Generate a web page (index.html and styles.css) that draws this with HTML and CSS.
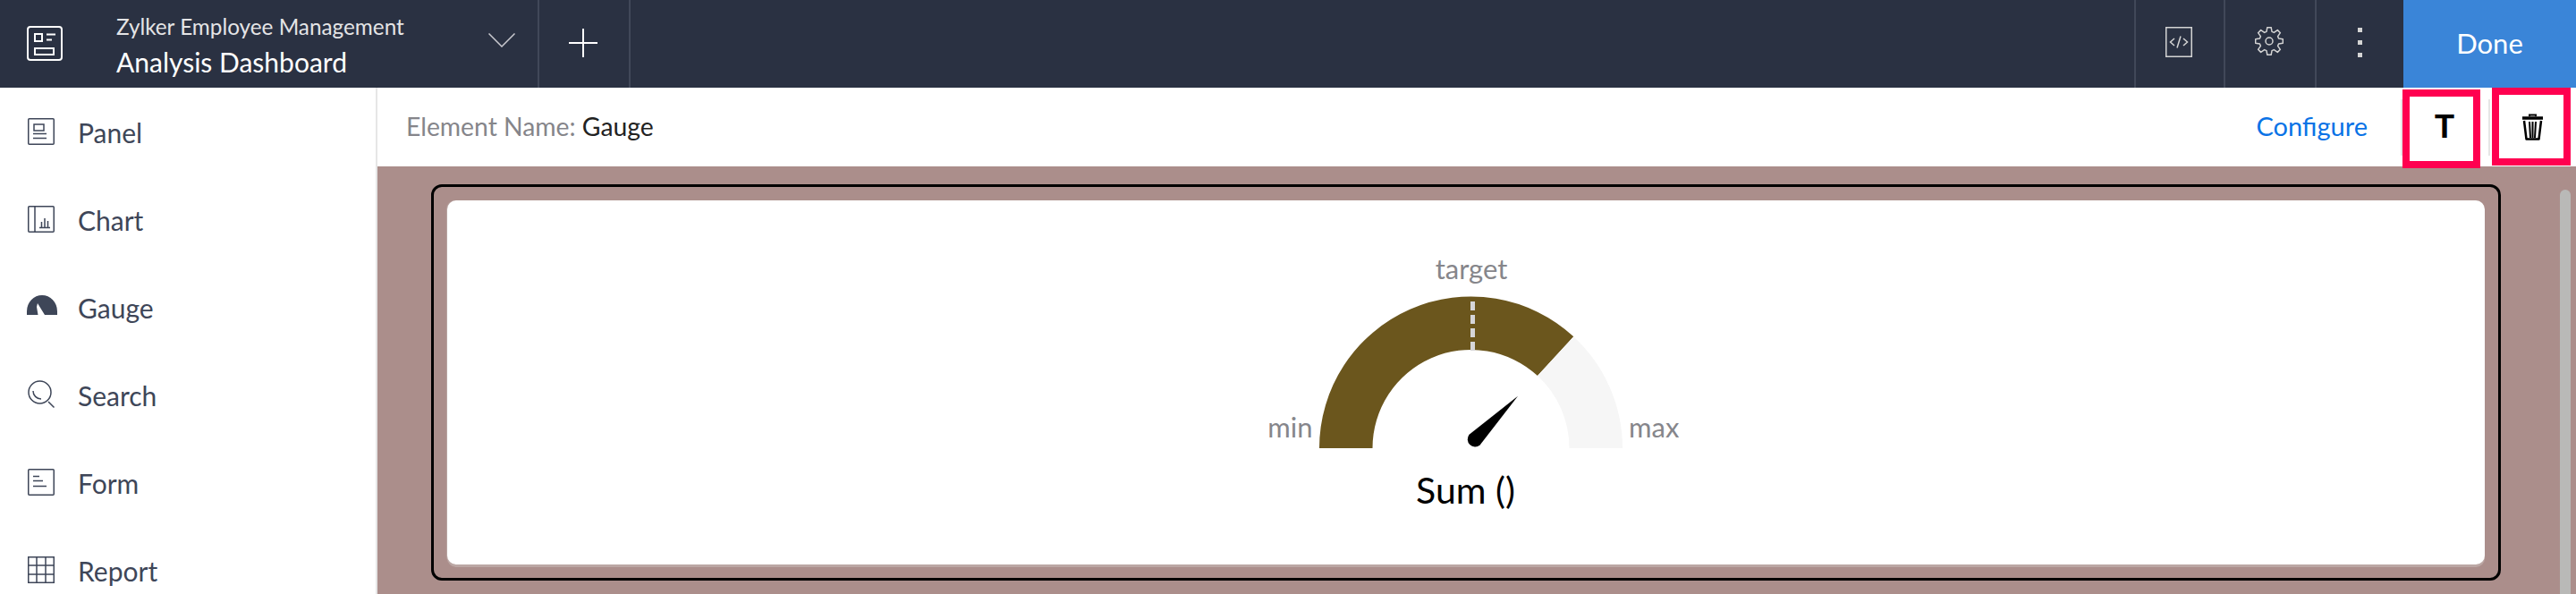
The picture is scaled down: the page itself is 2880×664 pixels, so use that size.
FILE: index.html
```html
<!DOCTYPE html>
<html lang="en">
<head>
    <meta charset="UTF-8">
    <title>Analysis Dashboard</title>
    <link rel="stylesheet" href="styles.css">
</head>
<body>
    <div class="app">
        <header class="topbar">
            <div class="brand">
                <svg class="brand-icon" viewBox="0 0 40 40" fill="none" stroke="#fff" stroke-width="2">
                    <rect x="1" y="1" width="38" height="37" rx="3"/>
                    <rect x="9" y="9" width="8" height="8"/>
                    <path d="M22 9.500h10M22 15.500h6"/>
                    <rect x="9" y="25" width="21" height="7"/>
                </svg>
                <div class="brand-text">
                    <div class="app-name">Zylker Employee Management</div>
                    <div class="page-name">Analysis Dashboard</div>
                </div>
                <svg class="chevron" viewBox="0 0 30 16" fill="none" stroke="#c9c9cf" stroke-width="1.500">
                    <path d="M0.500 0.500L15 15L29.500 0.500"/>
                </svg>
            </div>
            <div class="top-cell add-cell">
                <svg class="plus" viewBox="0 0 32 32" fill="none" stroke="#fff" stroke-width="2">
                    <path d="M16 0V32M0 16H32"/>
                </svg>
            </div>
            <div class="top-spacer"></div>
            <div class="top-cell code-cell">
                <svg class="code-icon" viewBox="0 0 30 34" fill="none" stroke="#d4d4d4" stroke-width="1.500">
                    <rect x="0.750" y="0.750" width="28.500" height="32.500"/>
                    <path d="M10 13L5.500 17L10 21M20 13L24.500 17L20 21M17 10.500L13 23.500"/>
                </svg>
            </div>
            <div class="top-cell gear-cell">
                <svg class="gear-icon" viewBox="0 0 32 32" fill="none" stroke="#d4d4d4" stroke-width="1.500" stroke-linejoin="round">
                    <polygon points="12.970,5.430 13.840,0.650 18.160,0.650 19.030,5.430 21.330,6.380 25.330,3.620 28.380,6.670 25.620,10.670 26.570,12.970 31.350,13.840 31.350,18.160 26.570,19.030 25.620,21.330 28.380,25.330 25.330,28.380 21.330,25.620 19.030,26.570 18.160,31.350 13.840,31.350 12.970,26.570 10.670,25.620 6.670,28.380 3.620,25.330 6.380,21.330 5.430,19.030 0.650,18.160 0.650,13.840 5.430,12.970 6.380,10.670 3.620,6.670 6.670,3.620 10.670,6.380"/>
                    <circle cx="16" cy="16" r="4"/>
                </svg>
            </div>
            <div class="top-cell more-cell">
                <span class="dot"></span>
                <span class="dot"></span>
                <span class="dot"></span>
            </div>
            <button class="done-btn">Done</button>
        </header>

        <div class="main">
            <nav class="sidebar">
                <div class="nav-item">
                    <svg class="nav-icon" viewBox="0 0 30 30" fill="none" stroke="#3e4658" stroke-width="1.500">
                        <rect x="0.750" y="0.750" width="28.500" height="28.500" rx="1"/>
                        <rect x="7" y="7" width="11" height="7"/>
                        <path d="M6 17.500H21M6 22.500H21"/>
                    </svg>
                    <span>Panel</span>
                </div>
                <div class="nav-item">
                    <svg class="nav-icon" viewBox="0 0 30 30" fill="none" stroke="#3e4658" stroke-width="1.500">
                        <rect x="0.750" y="0.750" width="28.500" height="28.500" rx="1"/>
                        <path d="M8 1V29M13 24.500H25M15.500 24V18M19 24V14M22.500 24V17"/>
                    </svg>
                    <span>Chart</span>
                </div>
                <div class="nav-item">
                    <svg class="nav-icon" viewBox="0 0 30 30" fill="#3e4658">
                        <path d="M-1 24V20A17 18 0 0 1 33 20V24H19L11 11L10 15L11.500 24Z"/>
                    </svg>
                    <span>Gauge</span>
                </div>
                <div class="nav-item">
                    <svg class="nav-icon" viewBox="0 0 30 30" fill="none" stroke="#3e4658" stroke-width="1.500">
                        <circle cx="13.500" cy="12.500" r="12.500"/>
                        <path d="M6 11C6 16 10 20 15 20M23 23L29.500 29.500"/>
                    </svg>
                    <span>Search</span>
                </div>
                <div class="nav-item">
                    <svg class="nav-icon" viewBox="0 0 30 30" fill="none" stroke="#3e4658" stroke-width="1.500">
                        <rect x="0.750" y="0.750" width="28.500" height="28.500" rx="1"/>
                        <path d="M6 8.500H13M6 13.500H17M6 19.500H21"/>
                    </svg>
                    <span>Form</span>
                </div>
                <div class="nav-item">
                    <svg class="nav-icon" viewBox="0 0 30 30" fill="none" stroke="#3e4658" stroke-width="1.500">
                        <rect x="0.750" y="0.750" width="28.500" height="28.500"/>
                        <path d="M10 1V29M20 1V29M1 10H29M1 20H29"/>
                    </svg>
                    <span>Report</span>
                </div>
            </nav>

            <section class="content">
                <div class="toolbar">
                    <div class="element-name"><span class="element-label">Element Name:</span> Gauge</div>
                    <a class="configure">Configure</a>
                    <div class="tool-btn"><span class="t-glyph">T</span></div>
                    <div class="tool-btn">
                        <svg class="trash-icon" viewBox="0 0 26 31" fill="none" stroke="#000" stroke-width="2.500">
                            <path d="M10 3V1.500H17V3" stroke-width="2"/>
                            <path d="M2 5H25" stroke-width="3.500"/>
                            <path d="M4 8L6.500 28.500H20.500L23 8" stroke-linejoin="round"/>
                            <path d="M10 9L11 27M13.500 9V27M17 9L16 27" stroke-width="2"/>
                        </svg>
                    </div>
                </div>
                <div class="canvas">
                    <div class="frame">
                        <div class="card">
                            <svg class="gauge" viewBox="0 0 500 320">
                                <path d="M86 233A169.500 169.500 0 0 1 370.300 108.300L330 152.100A110 110 0 0 0 145.500 233Z" fill="#6b561d"/>
                                <path d="M370.300 108.300A169.500 169.500 0 0 1 425 233H365.500A110 110 0 0 0 330 152.100Z" fill="#f6f6f6"/>
                                <path d="M257.500 69V125" class="target-line"/>
                                <path d="M308 174.700L265.600 229.600A8.500 8.500 0 0 1 253.600 217.700Z" fill="#000"/>
                                <text x="256" y="44" class="gauge-label" text-anchor="middle">target</text>
                                <text x="78.500" y="221" class="gauge-label" text-anchor="end">min</text>
                                <text x="432" y="221" class="gauge-label">max</text>
                                <text x="249.500" y="295" class="gauge-title" text-anchor="middle">Sum ()</text>
                            </svg>
                        </div>
                    </div>
                    <div class="scroll-thumb"></div>
                </div>
            </section>
        </div>
    </div>

    <div class="mark mark-type"></div>
    <div class="mark mark-delete"></div>
</body>
</html>
```

FILE: styles.css
```css
* {
    box-sizing: border-box;
}
body {
    margin: 0;
    height: 100vh;
    overflow: hidden;
    position: relative;
    font-family: Lato, "Noto Sans", sans-serif;
    background-color: #fff;
}
.app {
    display: flex;
    flex-direction: column;
    height: 100%;
}
.topbar {
    display: flex;
    height: 98px;
    flex-shrink: 0;
    background-color: #2a3142;
}
.brand {
    display: flex;
    align-items: center;
    width: 601px;
    padding-left: 30px;
}
.brand-icon {
    width: 40px;
    height: 40px;
    margin-top: -1px;
}
.brand-text {
    margin-left: 60px;
    margin-top: 4px;
    width: 416px;
}
.app-name {
    font-size: 24.300px;
    line-height: 30px;
    color: #e4e4e6;
    white-space: nowrap;
}
.page-name {
    font-size: 30px;
    line-height: 36px;
    color: #fff;
    margin-top: 6px;
    white-space: nowrap;
}
.chevron {
    width: 30px;
    height: 16px;
    margin-top: -8px;
}
.top-cell {
    display: flex;
    align-items: center;
    justify-content: center;
    border-left: 2px solid #414859;
    padding-right: 2px;
}
.add-cell {
    width: 102px;
}
.plus {
    width: 32px;
    height: 32px;
    margin-top: -2px;
}
.top-spacer {
    flex: 1;
    border-left: 2px solid #414859;
}
.code-cell {
    width: 100px;
}
.code-icon {
    width: 30px;
    height: 34px;
    margin-top: -4px;
}
.gear-cell {
    width: 102px;
}
.gear-icon {
    width: 32px;
    height: 32px;
    margin-top: -6px;
}
.more-cell {
    width: 99px;
    flex-direction: column;
    gap: 9px;
    padding: 0 0 4px;
}
.dot {
    width: 5px;
    height: 5px;
    background-color: #d4d4d4;
}
.done-btn {
    width: 193px;
    border: none;
    background-color: #3a85d8;
    color: #fff;
    font-family: inherit;
    font-size: 31px;
    padding: 0 0 2px;
}
.main {
    display: flex;
    flex: 1;
    min-height: 0;
}
.sidebar {
    width: 422px;
    flex-shrink: 0;
    padding-top: 2px;
    border-right: 2px solid #e6e6e6;
}
.nav-item {
    display: flex;
    align-items: center;
    height: 98px;
    padding-left: 31px;
    font-size: 30px;
    color: #3e4658;
}
.nav-item span {
    margin-bottom: 3px;
}
.nav-icon {
    width: 30px;
    height: 30px;
    margin-right: 26px;
    margin-top: -4px;
    overflow: visible;
}
.content {
    flex: 1;
    display: flex;
    flex-direction: column;
    min-width: 0;
}
.toolbar {
    display: flex;
    align-items: center;
    height: 88px;
    flex-shrink: 0;
    padding-left: 32px;
    background-color: #fff;
    color: #222;
}
.element-name {
    font-size: 28.300px;
    margin-bottom: 3px;
}
.element-label {
    color: #85858a;
}
.configure {
    margin-left: auto;
    margin-right: 37px;
    margin-bottom: 3px;
    color: #0a73e6;
    font-size: 29px;
}
.tool-btn {
    display: flex;
    align-items: center;
    justify-content: center;
    width: 98px;
    height: 63px;
    border-left: 2px solid #e6e6e6;
}
.t-glyph {
    font-family: "Liberation Sans", sans-serif;
    font-weight: 700;
    font-size: 36px;
    color: #000;
    margin-right: 2px;
}
.trash-icon {
    width: 26px;
    height: 31px;
    margin-right: 2px;
}
.canvas {
    flex: 1;
    position: relative;
    min-height: 0;
    padding: 20px 84px 15px 60px;
    background-color: #ab8e8b;
}
.frame {
    height: 100%;
    padding: 15px;
    border: 3px solid #000;
    border-radius: 12px;
}
.card {
    display: flex;
    align-items: center;
    justify-content: center;
    height: 100%;
    background-color: #fff;
    border-radius: 10px;
    box-shadow: 0 3px 0 #bba7a4, -1px 0 1px #bba7a4;
}
.gauge {
    width: 500px;
    height: 320px;
}
.target-line {
    stroke: #d5d5d8;
    stroke-width: 5;
    stroke-dasharray: 10 5;
    fill: none;
}
.gauge-label {
    font-size: 31px;
    fill: #86868b;
}
.gauge-title {
    font-size: 41px;
    fill: #000;
}
.scroll-thumb {
    position: absolute;
    top: 26px;
    bottom: 0;
    right: 6px;
    width: 12px;
    background-color: #b9b9b7;
    border-radius: 6px 6px 0 0;
}
.mark {
    position: absolute;
    border: 8px solid #ff0050;
}
.mark-type {
    left: 2686px;
    top: 100px;
    width: 87px;
    height: 88px;
}
.mark-delete {
    left: 2786px;
    top: 98px;
    width: 88px;
    height: 87px;
}
```
